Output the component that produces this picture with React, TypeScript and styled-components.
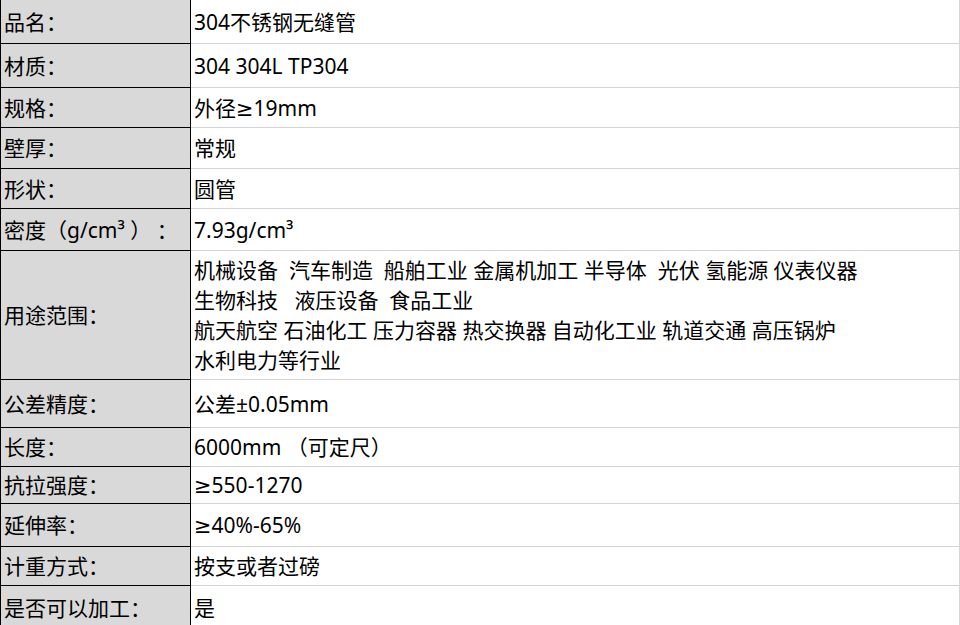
import React from 'react';
import styled, { createGlobalStyle } from 'styled-components';

type Spec = { label: string; value: string[]; h: number };

const specs: Spec[] = [
  { label: '品名：', value: ['304不锈钢无缝管'], h: 44 },
  { label: '材质：', value: ['304 304L TP304'], h: 44 },
  { label: '规格：', value: ['外径≥19mm'], h: 40 },
  { label: '壁厚：', value: ['常规'], h: 41 },
  { label: '形状：', value: ['圆管'], h: 40 },
  { label: '密度（g/cm³ ） ：', value: ['7.93g/cm³'], h: 42 },
  {
    label: '用途范围：',
    value: [
      '机械设备  汽车制造  船舶工业 金属机加工 半导体  光伏 氢能源 仪表仪器',
      '生物科技   液压设备  食品工业',
      '航天航空 石油化工 压力容器 热交换器 自动化工业 轨道交通 高压锅炉',
      '水利电力等行业',
    ],
    h: 129,
  },
  { label: '公差精度：', value: ['公差±0.05mm'], h: 48 },
  { label: '长度：', value: ['6000mm （可定尺）'], h: 39 },
  { label: '抗拉强度：', value: ['≥550-1270'], h: 37 },
  { label: '延伸率：', value: ['≥40%-65%'], h: 43 },
  { label: '计重方式：', value: ['按支或者过磅'], h: 39 },
  { label: '是否可以加工：', value: ['是'], h: 44 },
];

const App: () => React.ReactElement = () => (
  <>
    <GlobalStyle />
    <Table>
      {specs.map((s) => (
        <Row key={s.label} $h={s.h}>
          <Label>{s.label}</Label>
          <Value>
            {s.value.map((line) => (
              <Line key={line}>{line}</Line>
            ))}
          </Value>
        </Row>
      ))}
    </Table>
  </>
);

export default App;

const GlobalStyle = createGlobalStyle`
  html, body {
    margin: 0;
    padding: 0;
    background: #ffffff;
  }
  body {
    font-family: "Noto Sans", "DejaVu Sans", "Noto Sans CJK SC", sans-serif;
    color: #000000;
  }
`;

const Table = styled.div`
  width: 960px;
  height: 625px;
  overflow: hidden;
  display: flex;
  flex-direction: column;
`;

const Row = styled.div<{ $h: number }>`
  display: grid;
  grid-template-columns: 191px 1fr;
  height: ${({ $h }) => $h}px;
  flex: none;
`;

const Label = styled.div`
  display: flex;
  align-items: center;
  padding-left: 3px;
  background: #d9d9d9;
  border-left: 1px solid #000000;
  border-right: 1px solid #000000;
  border-bottom: 1px solid #000000;
  font-size: 21px;
  line-height: 30px;
  white-space: pre;
`;

const Value = styled.div`
  display: flex;
  flex-direction: column;
  justify-content: center;
  padding-left: 3px;
  border-right: 1px solid #d4d4d4;
  border-bottom: 1px solid #d4d4d4;
  font-size: 21px;
  line-height: 30px;
`;

const Line = styled.div`
  white-space: pre;
`;
